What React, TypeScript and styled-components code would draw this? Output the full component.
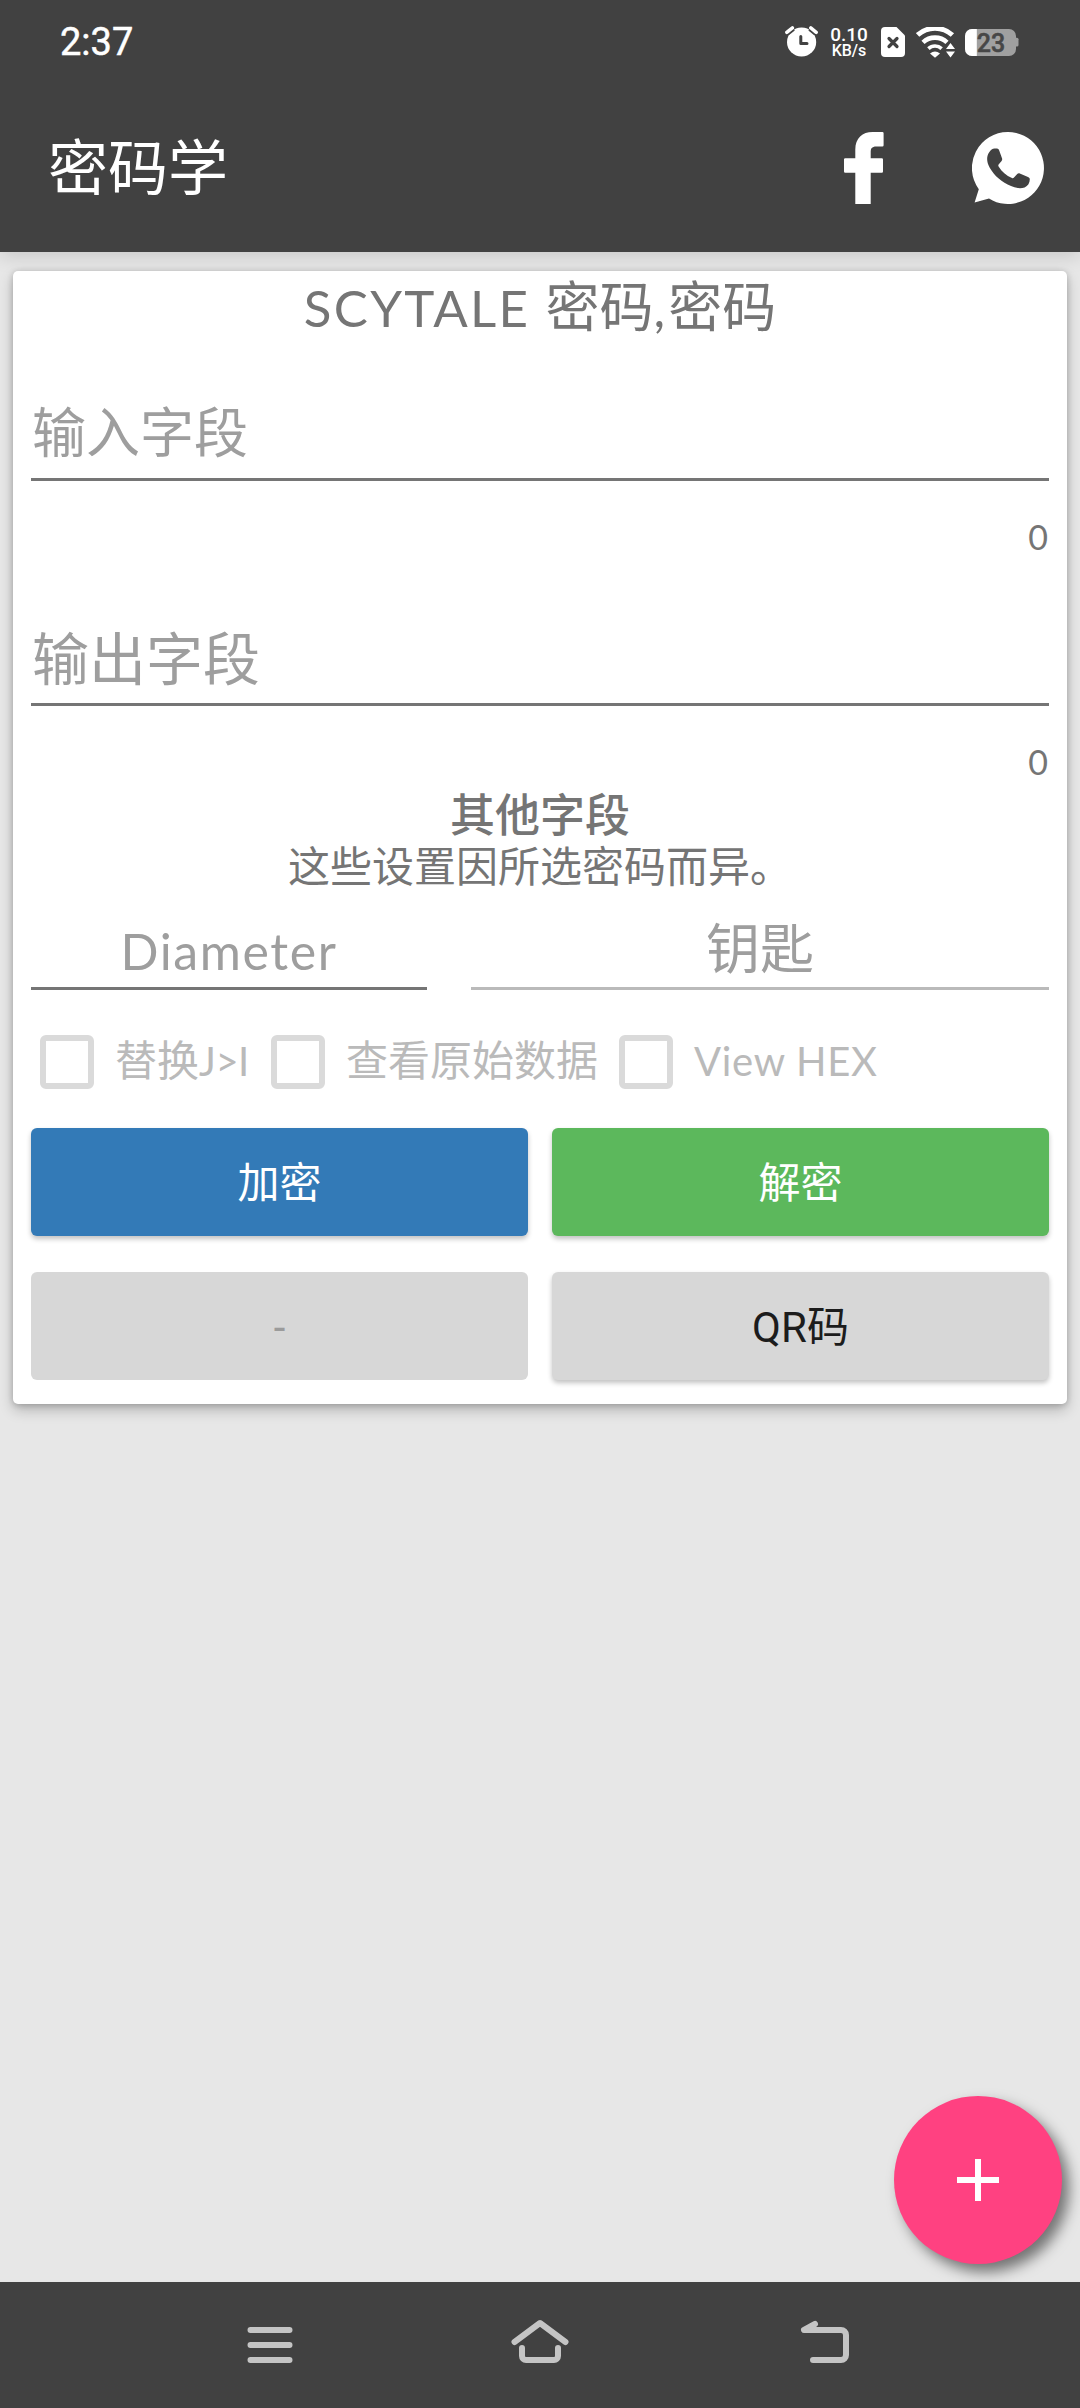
import React from "react";
import styled, { createGlobalStyle } from "styled-components";

const CJK = '"Noto Sans CJK SC", "Noto Sans", sans-serif';

const GlobalStyle = createGlobalStyle`
  * { box-sizing: border-box; }
  html, body { margin: 0; padding: 0; background: #e7e7e7; }
`;

const Screen = styled.div`
  width: 1080px;
  height: 2408px;
  display: flex;
  flex-direction: column;
  position: relative;
  overflow: hidden;
  background: #e7e7e7;
  font-family: ${CJK};
`;

const Header = styled.header`
  height: 252px;
  flex: none;
  background: #414141;
  color: #fff;
  box-shadow: 0 4px 18px rgba(0, 0, 0, 0.14);
`;

const StatusBar = styled.div`
  height: 84px;
  display: flex;
  align-items: center;
  justify-content: space-between;
  padding: 0 61px 0 60px;
`;

const Clock = styled.span`
  font: 400 38px/44px Roboto, sans-serif;
  -webkit-text-stroke: 0.5px #fff;
`;

const StatusIcons = styled.div`
  display: flex;
  align-items: center;
`;

const NetSpeed = styled.div`
  width: 36px;
  margin: 0 14px 0 13px;
  display: flex;
  flex-direction: column;
  align-items: center;
  font-family: Roboto, sans-serif;
  font-weight: 500;
`;

const SpeedValue = styled.span`
  font-size: 19px;
  line-height: 17px;
`;

const SpeedUnit = styled.span`
  font-size: 16px;
  line-height: 15px;
`;

const AppBar = styled.div`
  height: 168px;
  display: flex;
  align-items: center;
  padding: 0 36px 0 48px;
`;

const AppTitle = styled.h1`
  flex: 1;
  margin: 0;
  padding-bottom: 9px;
  font-size: 60px;
  line-height: 80px;
  font-weight: 400;
`;

const BarIcon = styled.svg<{ $gap?: number }>`
  width: 72px;
  height: 72px;
  margin-right: ${(p) => p.$gap ?? 0}px;
`;

const Content = styled.main`
  flex: 1;
  padding: 19px 13px 0;
`;

const Card = styled.section`
  height: 1133px;
  padding: 0 18px;
  background: #fff;
  border-radius: 5px;
  color: #757575;
  box-shadow: 0 6px 14px rgba(0, 0, 0, 0.22), 0 1px 6px rgba(0, 0, 0, 0.2);
`;

const CipherName = styled.h2`
  margin: 0;
  height: 62px;
  text-align: center;
  font-size: 54px;
  line-height: 65px;
  font-weight: 400;
  white-space: pre;
`;

const Latin = styled.span<{ $size: number; $spacing?: number }>`
  font-family: Lato, sans-serif;
  font-size: ${(p) => p.$size}px;
  letter-spacing: ${(p) => p.$spacing ?? 0}px;
  line-height: 1;
`;

const Field = styled.div<{ $height: number; $size: number; $centered?: boolean; $disabled?: boolean }>`
  height: ${(p) => p.$height}px;
  display: flex;
  align-items: flex-end;
  justify-content: ${(p) => (p.$centered ? "center" : "flex-start")};
  padding: 0 1px ${(p) => (p.$centered ? 11 : 18)}px;
  border-bottom: 3px solid ${(p) => (p.$disabled ? "#bababa" : "#757575")};
  color: #9e9e9e;
  font-size: ${(p) => p.$size}px;
  line-height: 60px;
`;

const Counter = styled.div`
  height: 77px;
  padding: 34px 1px 0;
  text-align: right;
  line-height: 44px;
  font-size: 34px;
  font-family: Lato, sans-serif;
`;

const SettingsHeading = styled.h3`
  margin: 4px 0 0;
  text-align: center;
  font-size: 45px;
  line-height: 52px;
  height: 51px;
  font-weight: 500;
`;

const SettingsHint = styled.p`
  margin: 0;
  height: 50px;
  text-align: center;
  font-size: 42px;
  line-height: 51px;
`;

const FieldRow = styled.div`
  display: grid;
  grid-template-columns: 396px 578px;
  justify-content: space-between;
`;

const CheckRow = styled.div`
  height: 138px;
  padding: 6px 0 0 9px;
  display: grid;
  grid-template-columns: 231px 348px 1fr;
  align-items: center;
`;

const CheckItem = styled.label`
  display: flex;
  align-items: center;
  gap: 21px;
  color: #bababa;
`;

const Box = styled.span`
  flex: none;
  width: 54px;
  height: 54px;
  border: 6px solid #dadada;
  border-radius: 6px;
`;

const CheckText = styled.span`
  font-size: 42px;
  line-height: 60px;
  padding-bottom: 8px;
  white-space: nowrap;
`;

const Actions = styled.div`
  display: grid;
  grid-template-columns: 1fr 1fr;
  grid-auto-rows: 108px;
  gap: 36px 24px;
`;

const ActionButton = styled.button<{ $bg: string; $fg: string; $flat?: boolean }>`
  border: 0;
  border-radius: 6px;
  padding: 0 0 5px;
  background: ${(p) => p.$bg};
  color: ${(p) => p.$fg};
  font-family: ${CJK};
  font-size: 42px;
  line-height: 60px;
  box-shadow: ${(p) => (p.$flat ? "none" : "0 3px 5px rgba(0, 0, 0, 0.24)")};
`;

const ButtonLatin = styled.span`
  font-family: Roboto, sans-serif;
  line-height: 1;
`;

/* Floats above the page content, bottom right. */
const Fab = styled.button`
  position: absolute;
  right: 18px;
  bottom: 144px;
  width: 168px;
  height: 168px;
  border: 0;
  padding: 0;
  border-radius: 50%;
  background: #ff4181;
  display: flex;
  align-items: center;
  justify-content: center;
  box-shadow: 7px 8px 14px rgba(0, 0, 0, 0.5);
`;

const NavBar = styled.nav`
  height: 126px;
  flex: none;
  position: relative;
  background: #414141;
  display: grid;
  grid-template-columns: repeat(3, 270px);
  justify-content: center;
  justify-items: center;
  align-items: center;
`;

const NavIcon = styled.svg<{ $indent?: number }>`
  width: 66px;
  height: 60px;
  margin-left: ${(p) => p.$indent ?? 0}px;
  fill: none;
  stroke: #c4c4c4;
  stroke-width: 6;
  stroke-linecap: round;
  stroke-linejoin: round;
`;

const StatusSvg = styled.svg<{ $gap?: number }>`
  margin-right: ${(p) => p.$gap ?? 0}px;
`;

const BatteryLevel = styled.text`
  font: 500 25px Roboto, sans-serif;
  fill: #474747;
  stroke: #474747;
  stroke-width: 0.5px;
`;

const AlarmIcon = () => (
  <StatusSvg width="33" height="32" viewBox="0 0 33 32">
    <circle cx="16.6" cy="16" r="14.6" fill="#fff" />
    <path d="M1.600 6.600 7.600 1.800M25.600 1.800 31.400 6.600" stroke="#414141" strokeWidth="7" />
    <path d="M1.800 6.400 7.400 1.900M25.800 1.900 31.200 6.400" stroke="#fff" strokeWidth="3.400" strokeLinecap="round" />
    <path d="M15.8 10.5V17.6H22" stroke="#414141" strokeWidth="3" fill="none" strokeLinecap="round" strokeLinejoin="round" />
  </StatusSvg>
);

const SimIcon = () => (
  <StatusSvg $gap={11} width="24" height="30" viewBox="0 0 24 30">
    <path d="M4 0H15.5L24 8.5V26a4 4 0 0 1-4 4H4a4 4 0 0 1-4-4V4a4 4 0 0 1 4-4Z" fill="#fff" />
    <path d="M8 11.5 16 19.5M16 11.5 8 19.5" stroke="#414141" strokeWidth="3.2" strokeLinecap="round" />
  </StatusSvg>
);

const WifiIcon = () => (
  <StatusSvg $gap={10} width="39" height="31" viewBox="0 0 39 31">
    <g fill="none" stroke="#fff" strokeWidth="5">
      <path d="M1.600 8A26 26 0 0 1 36.400 8" />
      <path d="M7 15.400A17.500 17.500 0 0 1 31 15.400" strokeWidth="4.600" />
      <path d="M12.400 21.600A9.600 9.600 0 0 1 25.600 21.600" strokeWidth="3.600" />
    </g>
    <path d="M14 26.500A8 8 0 0 1 24 26.500L19 30.800Z" fill="#fff" />
    <path d="M34.500 13 42 22.400V33H28.500L27 22.400Z" fill="#414141" />
    <path d="M34.500 16 39 22H30ZM34.500 30.600 30 24.600H39Z" fill="#fff" />
  </StatusSvg>
);

const BatteryIcon = () => (
  <StatusSvg width="54" height="32" viewBox="0 -2 54 32">
    <rect x="0" y="1" width="51" height="27" rx="7" fill="#a0a0a0" />
    <path d="M7 1H11.8V28H7A7 7 0 0 1 0 21V8A7 7 0 0 1 7 1Z" fill="#fff" />
    <path d="M50 9.8H52a1.5 1.5 0 0 1 1.5 1.5V17a1.5 1.5 0 0 1-1.5 1.5H50Z" fill="#a0a0a0" />
    <BatteryLevel x="11.7" y="23.6">23</BatteryLevel>
  </StatusSvg>
);

const checks: React.ReactNode[] = [
  <>替换<Latin $size={40} $spacing={-0.5}>J&gt;I</Latin></>,
  "查看原始数据",
  <Latin $size={40} $spacing={0.7}>View HEX</Latin>,
];

export default function App() {
  return (
    <Screen>
      <GlobalStyle />
      <Header>
        <StatusBar>
          <Clock>2:37</Clock>
          <StatusIcons>
            <AlarmIcon />
            <NetSpeed>
              <SpeedValue>0.10</SpeedValue>
              <SpeedUnit>KB/s</SpeedUnit>
            </NetSpeed>
            <SimIcon />
            <WifiIcon />
            <BatteryIcon />
          </StatusIcons>
        </StatusBar>
        <AppBar>
          <AppTitle>密码学</AppTitle>
          <BarIcon viewBox="0 0 72 72" $gap={72}>
            <path
              fill="#fff"
              d="M27.3 72V40.7H17.2A1.2 1.2 0 0 1 16 39.5V27.4A1.2 1.2 0 0 1 17.2 26.2H27.3V17.6C27.3 6 34.4 0 44.6 0H54.4A1.2 1.2 0 0 1 55.6 1.2V13.2A1.2 1.2 0 0 1 54.4 14.4H48.4C43.6 14.4 42.7 16.6 42.7 20V26.2H53.8A1.2 1.2 0 0 1 55 27.4V39.5A1.2 1.2 0 0 1 53.8 40.7H42.7V72Z"
            />
          </BarIcon>
          <BarIcon viewBox="0 0 72 72">
            <path
              fill="#fff"
              d="M36 0A36 36 0 1 1 17 66.6L2.6 70.4 6.8 57.2A36 36 0 0 1 36 0Z"
            />
            <path
              fill="#414141"
              d="M17.2 20.2C18.6 18.2 20.6 16.6 22.4 16.6H25C26 16.6 26.8 17.4 27.3 18.8L30 26.2C30.4 27.4 30.2 28.2 29.4 29.2L26.6 32.6C26.2 33.2 26.2 33.8 26.6 34.4C29.8 39.6 34.2 43.6 40 46C40.8 46.4 41.4 46.2 42 45.6L45.2 42C46 41.2 46.8 41 47.8 41.4L56 45C57.2 45.6 57.8 46.2 57.8 47.2C57.8 50.8 56 54 52.6 55.4C48.4 57 43.4 56 39 54C30 50.4 22.4 43.8 17.6 35.4C14.6 30.2 14.2 24.6 17.2 20.2Z"
            />
          </BarIcon>
        </AppBar>
      </Header>

      <Content>
        <Card>
          <CipherName>
            <Latin $size={51} $spacing={2.3}>SCYTALE </Latin>密码<Latin $size={51} $spacing={3}>,</Latin>密码
          </CipherName>
          <Field $height={148} $size={54}>输入字段</Field>
          <Counter>0</Counter>
          <Field $height={148} $size={57}>输出字段</Field>
          <Counter>0</Counter>
          <SettingsHeading>其他字段</SettingsHeading>
          <SettingsHint>这些设置因所选密码而异。</SettingsHint>
          <FieldRow>
            <Field $height={102} $size={54} $centered>
              <Latin $size={50} $spacing={1.6}>Diameter</Latin>
            </Field>
            <Field $height={102} $size={54} $centered $disabled>钥匙</Field>
          </FieldRow>
          <CheckRow>
            {checks.map((text, i) => (
              <CheckItem key={i}>
                <Box />
                <CheckText>{text}</CheckText>
              </CheckItem>
            ))}
          </CheckRow>
          <Actions>
            <ActionButton $bg="#337ab7" $fg="#fff">加密</ActionButton>
            <ActionButton $bg="#5cb85c" $fg="#fff">解密</ActionButton>
            <ActionButton $bg="#d7d7d7" $fg="#9b9b9b" $flat>
              <ButtonLatin>-</ButtonLatin>
            </ActionButton>
            <ActionButton $bg="#d7d7d7" $fg="#1c1c1c">
              <ButtonLatin>QR</ButtonLatin>码
            </ActionButton>
          </Actions>
        </Card>
      </Content>

      <Fab>
        <svg width="42" height="42" viewBox="0 0 42 42">
          <path d="M21 0V42M0 21H42" stroke="#fff" strokeWidth="6" />
        </svg>
      </Fab>

      <NavBar>
        <NavIcon viewBox="0 0 66 60">
          <path d="M13.5 15H52.5M13.5 30H52.5M13.5 45H52.5" />
        </NavIcon>
        <NavIcon viewBox="0 0 66 60">
          <path d="M7.5 27 33 8 58.5 27" />
          <path d="M15 33V41a4 4 0 0 0 4 4H47a4 4 0 0 0 4-4V33" />
        </NavIcon>
        <NavIcon viewBox="0 0 66 60" $indent={30}>
          <path d="M23 9 12 15H49a5 5 0 0 1 5 5V40a5 5 0 0 1-5 5H21" />
        </NavIcon>
      </NavBar>
    </Screen>
  );
}
